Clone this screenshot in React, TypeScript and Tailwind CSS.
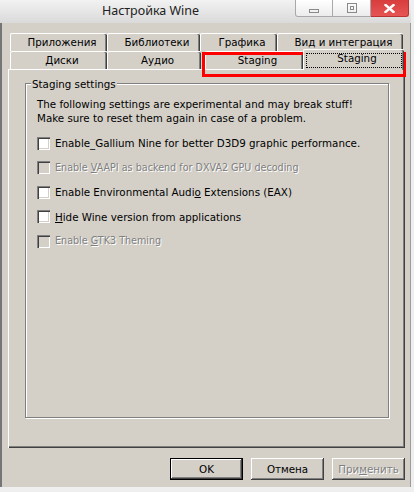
import { useState } from "react";

const tabFont = "font-['DejaVu_Sans',sans-serif] text-[10.3px] text-black";

const BackTab = ({ label, w }: { label: string; w: string }) => (
  <div
    className={`${w} h-[18px] flex items-center justify-center pl-[6px] border-t border-l border-white rounded-tl-[2px] rounded-tr-[2px] shadow-[inset_-1px_0_#404040,inset_-2px_0_#808080] ${tabFont}`}
  >
    {label}
  </div>
);

const CheckRow = ({
  children,
  disabled = false,
  first = false,
}: {
  children: React.ReactNode;
  disabled?: boolean;
  first?: boolean;
}) => {
  const [checked, setChecked] = useState(false);
  return (
    <div
      className={`flex items-center h-[24.5px] ${first ? "mt-[5.75px]" : ""}`}
      onClick={() => !disabled && setChecked(!checked)}
    >
      <div
        className={`w-[13px] h-[13px] shrink-0 flex items-center justify-center shadow-[inset_1px_1px_#808080,inset_2px_2px_#404040,inset_-1px_-1px_#fff,inset_-2px_-2px_#d4d0c8] ${
          disabled ? "bg-[#d4d0c8]" : "bg-white"
        }`}
      >
        {checked && <span className="text-[10px] leading-none">✓</span>}
      </div>
      <span
        className={`ml-[5px] font-['DejaVu_Sans',sans-serif] leading-[14px] whitespace-nowrap ${
          disabled
            ? "text-[9.6px] text-[#808080] [text-shadow:1px_1px_0_#fff]"
            : "text-[10.3px] text-black"
        }`}
      >
        {children}
      </span>
    </div>
  );
};

const Button = ({
  children,
  isDefault = false,
  disabled = false,
}: {
  children: React.ReactNode;
  isDefault?: boolean;
  disabled?: boolean;
}) => (
  <button
    className={`w-[73px] h-[22px] flex items-center justify-center pt-[2px] bg-[#d4d0c8] font-['DejaVu_Sans',sans-serif] text-[10.3px] shadow-[inset_-1px_-1px_#404040,inset_1px_1px_#fff,inset_-2px_-2px_#808080] ${
      isDefault ? "border border-black" : ""
    } ${disabled ? "text-[#808080] [text-shadow:1px_1px_0_#fff]" : "text-black"}`}
  >
    {children}
  </button>
);

export default function App() {
  return (
    <div className="relative w-[414px] h-[492px] bg-[#efefef] overflow-hidden">
      <div className="w-[411px] h-[487px] flex flex-col">
        {/* title bar */}
        <div className="h-[23px] flex bg-gradient-to-b from-[#f2f2f2] to-[#dadada]">
          <div className="w-[295px] flex items-center justify-center pl-[6px] pb-[1px] font-['Noto_Sans',sans-serif] text-[12.5px] text-[#222]">
            Настройка Wine
          </div>
          <div className="flex h-[17px]">
            <div className="w-[38px] h-full flex items-end justify-center pb-[3px] border border-t-0 border-[#a9a9a9] rounded-bl-[3px] bg-gradient-to-b from-white to-[#ececec]">
              <div className="w-[10px] h-[4px] border border-[#8a8a8a]" />
            </div>
            <div className="w-[38px] h-full flex items-center justify-center border-b border-r border-[#a9a9a9] bg-gradient-to-b from-white to-[#ececec]">
              <div className="w-[10px] h-[10px] border border-[#8a8a8a] flex items-center justify-center">
                <div className="w-[4px] h-[4px] border border-[#8a8a8a]" />
              </div>
            </div>
            <div className="w-[38px] h-full flex items-center justify-center rounded-br-[3px] bg-gradient-to-b from-[#d83d3d] to-[#e65454] border-b border-r border-[#b83232]">
              <svg width="11" height="9" viewBox="0 0 11 9">
                <path d="M1.5 1 L9.5 8 M9.5 1 L1.5 8" stroke="#fff" strokeWidth="2.4" strokeLinecap="square" />
              </svg>
            </div>
          </div>
        </div>

        {/* body */}
        <div className="flex-1 flex flex-col bg-[#d4d0c8] border-l-2 border-[#767676] border-r border-r-[#9c9c9c] pt-[10px]">
          <div className="flex ml-[8px]">
            <BackTab label="Приложения" w="w-[97px]" />
            <BackTab label="Библиотеки" w="w-[93px]" />
            <BackTab label="Графика" w="w-[77px]" />
            <BackTab label="Вид и интеграция" w="w-[126px]" />
          </div>
          <div className="flex items-start ml-[8px] h-[18px]">
            <BackTab label="Диски" w="w-[97px]" />
            <BackTab label="Аудио" w="w-[94px]" />
            <div className="ml-[4px]">
              <BackTab label="Staging" w="w-[98px]" />
            </div>
            <div
              className={`relative z-10 -mt-[2px] w-[101px] h-[21px] flex items-center justify-center pl-[6px] pb-[2px] bg-[#d4d0c8] border-t border-l border-white rounded-tl-[2px] rounded-tr-[2px] shadow-[inset_-1px_0_#404040,inset_-2px_0_#808080] ${tabFont}`}
            >
              Staging
              <div className="absolute left-[2px] right-[2px] top-[3px] bottom-[2px] border border-dotted border-black" />
            </div>
          </div>

          {/* page */}
          <div className="ml-[6px] w-[397px] h-[379px] border-t border-l border-white shadow-[inset_-1px_-1px_#404040,inset_-2px_-2px_#808080] pl-[16px] pt-[13px]">
            <div className="relative w-[364px] h-[335px] border border-[#808080] shadow-[inset_1px_1px_#fff,1px_1px_#fff] pl-[11px] pt-[13px]">
              <div className="absolute left-[5px] -top-[7px] px-[1px] bg-[#d4d0c8] font-['DejaVu_Sans',sans-serif] text-[10.3px] leading-[14px] text-black">
                Staging settings
              </div>
              <div className="font-['DejaVu_Sans',sans-serif] text-[10.3px] leading-[14px] text-black">
                <div>The following settings are experimental and may break stuff!</div>
                <div>Make sure to reset them again in case of a problem.</div>
              </div>
              <CheckRow first>Enable_Gallium Nine for better D3D9 graphic performance.</CheckRow>
              <CheckRow disabled>
                Enable <u>V</u>AAPI as backend for DXVA2 GPU decoding
              </CheckRow>
              <CheckRow>
                Enable Environmental Audi<u>o</u> Extensions (EAX)
              </CheckRow>
              <CheckRow>
                <u>H</u>ide Wine version from applications
              </CheckRow>
              <CheckRow disabled>
                Enable <u>G</u>TK3 Theming
              </CheckRow>
            </div>
          </div>

          <div className="flex justify-end gap-[8px] pr-[5px] mt-[10px]">
            <Button isDefault>OK</Button>
            <Button>Отмена</Button>
            <Button disabled>
              При<u>м</u>енить
            </Button>
          </div>
        </div>
      </div>

      {/* annotation */}
      <div className="absolute left-[202px] top-[52px] w-[204px] h-[25px] border-[3px] border-[#ff0000] pointer-events-none" />
    </div>
  );
}
